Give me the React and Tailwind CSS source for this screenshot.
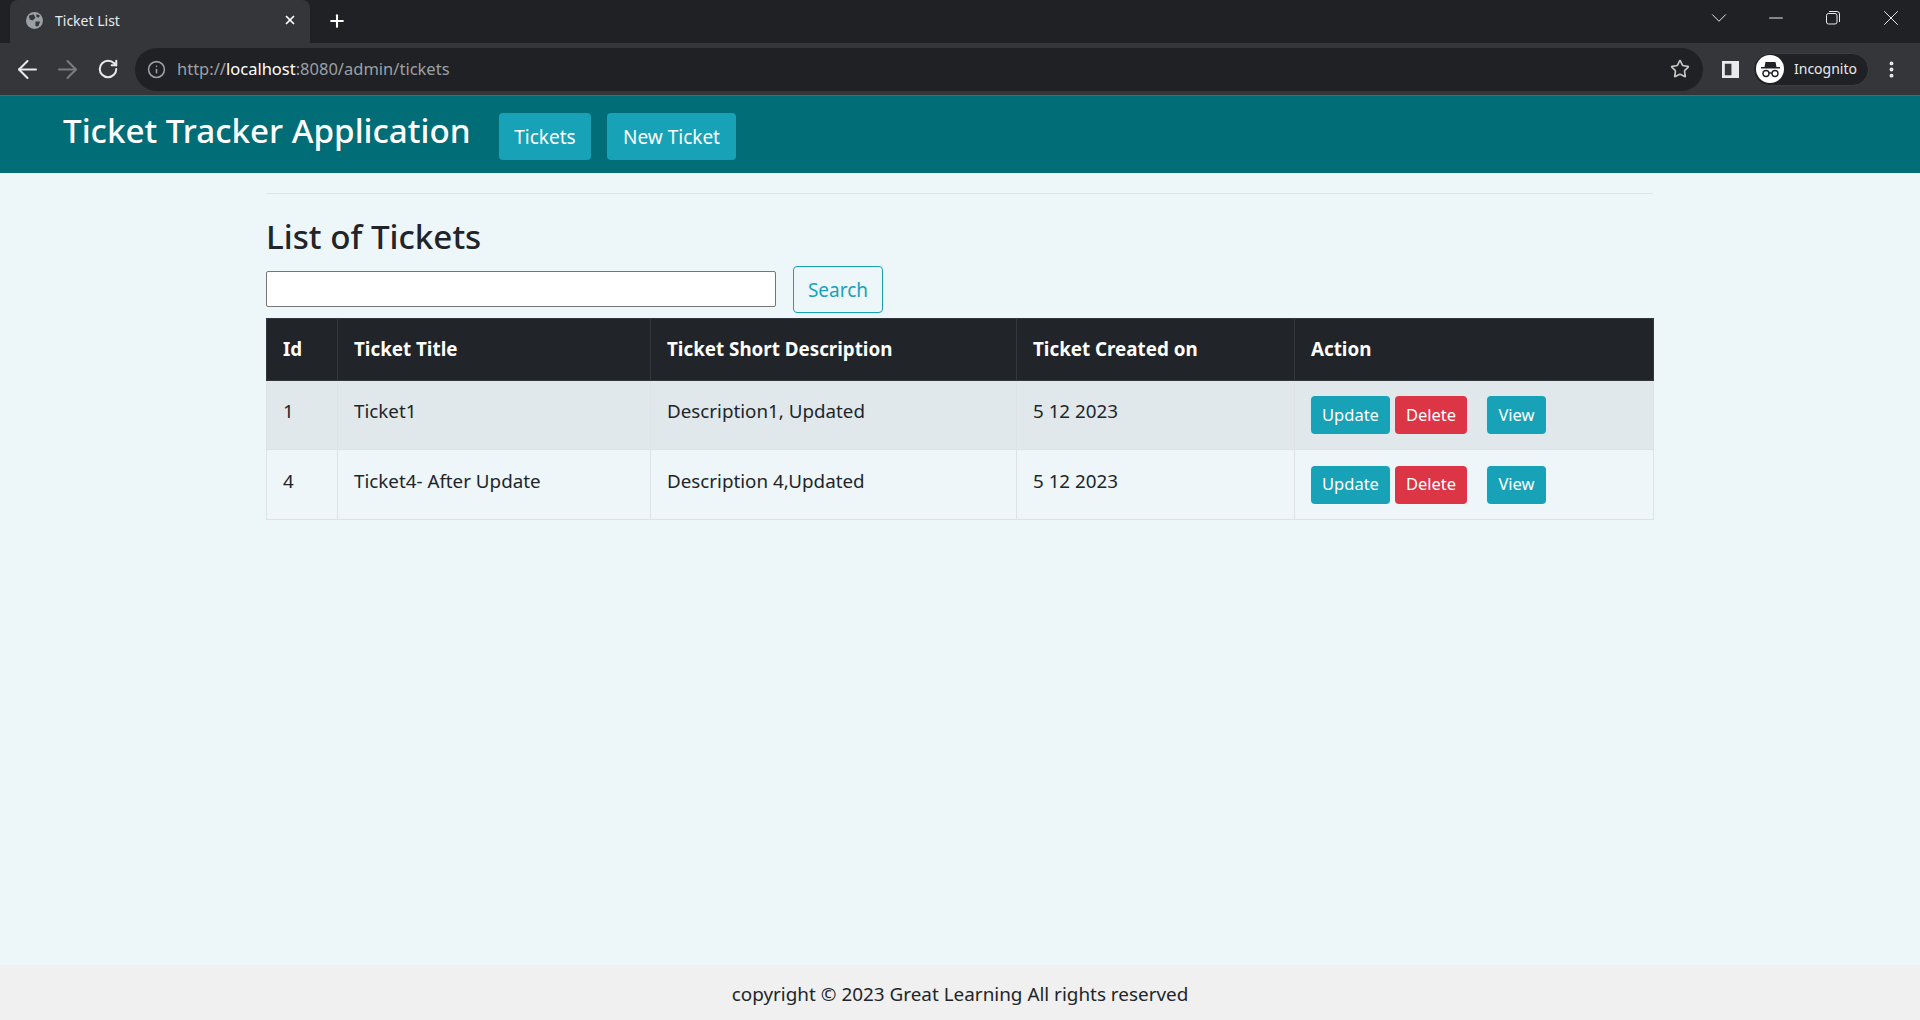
import React from 'react';
import { ArrowLeft, ArrowRight, RotateCw, Info, Star, X, Plus, ChevronDown, Minus, EllipsisVertical } from 'lucide-react';

const rows = [
    { id: 1, title: 'Ticket1', desc: 'Description1, Updated', date: '5 12 2023', rowClass: 'h-[69px] bg-[#e1e8eb]' },
    { id: 4, title: 'Ticket4- After Update', desc: 'Description 4,Updated', date: '5 12 2023', rowClass: 'h-[70px] bg-[#eef6f9]' },
];

const BrowserChrome = () => (
    <div className="font-['Noto_Sans',sans-serif]">
        <div className="flex h-[43px] bg-[#202124] pl-[10px]">
            <div className="flex h-[43px] w-[300px] items-center rounded-t-lg bg-[#35363a] pr-[13px] pb-[3px] pl-4 text-white">
                <svg width="17" height="17" viewBox="0 0 18 18" className="mr-[12px] shrink-0">
                    <circle cx="9" cy="9" r="9" fill="#9aa0a6" />
                    <path d="M3 4 L8 2.5 L10 6 L7 9 L4 8 Z M10 10 L15 10 L13 15 L10 15 Z M11 2 L15 4 L13 6 L11 5 Z" fill="#35363a" />
                </svg>
                <span className="text-[14px] text-[#e8eaed]">Ticket List</span>
                <X size={14} strokeWidth={3} className="ml-auto" />
            </div>
            <Plus size={20} strokeWidth={2.5} className="mt-[11px] ml-[17px] text-white" />
            <div className="ml-auto flex h-[36px] items-center pr-[16px] text-[#e8eaed]">
                <ChevronDown size={26} strokeWidth={0.9} />
                <Minus size={22} strokeWidth={1.1} className="ml-[33px]" />
                <svg width="14" height="14" viewBox="0 0 14 14" fill="none" stroke="currentColor" className="ml-[39px]">
                    <rect x="0.5" y="2.5" width="10.5" height="10.5" rx="2" />
                    <path d="M3 .5 H11 A2.5 2.5 0 0 1 13.5 3 V11" />
                </svg>
                <X size={26} strokeWidth={0.9} className="ml-[38px]" />
            </div>
        </div>
        <div className="flex h-[53px] items-center border-b border-[#5f6368] bg-[#35363a] pr-[18px] pl-[13px]">
            <ArrowLeft size={29} strokeWidth={1.7} className="shrink-0 text-[#e8eaed]" />
            <ArrowRight size={29} strokeWidth={1.7} className="ml-[11px] shrink-0 text-[#7a7c80]" />
            <RotateCw size={22} strokeWidth={2.2} className="ml-[15px] shrink-0 text-[#e8eaed]" />
            <div className="ml-[16px] flex h-[43px] flex-1 items-center rounded-full bg-[#202124] pr-[13px] pl-[12px] text-[16.5px]">
                <Info size={19} strokeWidth={2} className="mr-[11px] text-[#9aa0a6]" />
                <span className="text-[#9aa0a6]">http://</span>
                <span className="text-white">localhost</span>
                <span className="text-[#9aa0a6]">:8080/admin/tickets</span>
                <Star size={20} strokeWidth={2} className="ml-auto text-[#c4c7c5]" />
            </div>
            <svg width="17" height="17" viewBox="0 0 18 18" className="ml-[19px] shrink-0">
                <path fillRule="evenodd" d="M0 0H18V18H0Z M3 3V15H10V3Z" fill="#e8eaed" />
            </svg>
            <div className="ml-[14px] flex h-[33px] w-[116px] items-center rounded-full border border-[#3c3d41] bg-[#202124] pl-[2px]">
                <span className="flex h-[28px] w-[28px] items-center justify-center rounded-full bg-white">
                    <svg width="21" height="17" viewBox="0 0 21 17">
                        <path d="M5.5 1H15.5L16.5 6H20V7.5H1V6H4.5Z" fill="#202124" />
                        <circle cx="6" cy="12.5" r="3" fill="none" stroke="#202124" strokeWidth="1.4" />
                        <circle cx="15" cy="12.5" r="3" fill="none" stroke="#202124" strokeWidth="1.4" />
                        <path d="M9 12H12" stroke="#202124" strokeWidth="1.4" />
                    </svg>
                </span>
                <span className="ml-[10px] pb-[2px] text-[14px] text-[#e8eaed]">Incognito</span>
            </div>
            <EllipsisVertical size={21} strokeWidth={2.5} className="ml-[12px] shrink-0 text-[#e8eaed]" />
        </div>
    </div>
);

const ActionBtn = ({ className = '', children }) => (
    <button className={`${className} h-[38px] rounded-[4px] text-[16.5px] text-white`}>{children}</button>
);

const App = () => (
    <div className="flex h-[1020px] flex-col overflow-hidden bg-[#edf6f9] font-['Noto_Sans',sans-serif] text-[#212529]">
        <BrowserChrome />
        <header className="flex h-[77px] bg-[#006d77] pl-[63px] text-white">
            <h1 className="mt-[11px] w-[408px] text-[33.2px] leading-[48px] font-medium whitespace-nowrap">Ticket Tracker Application</h1>
            <nav className="mt-[17px] ml-[28px] flex gap-4">
                <button className="h-[47px] w-[92px] rounded-[4px] bg-[#17a2b8] pt-[1px] text-[19px]">Tickets</button>
                <button className="h-[47px] w-[129px] rounded-[4px] bg-[#17a2b8] pt-[1px] text-[19px]">New Ticket</button>
            </nav>
        </header>
        <main className="ml-[266px] w-[1387px] flex-1 pt-5">
            <hr className="border-[#dde4e7]" />
            <h2 className="mt-[19px] mb-[5px] text-[33.2px] leading-[48px] font-medium">List of Tickets</h2>
            <div className="flex items-center">
                <input className="mb-[2px] h-[36px] w-[510px] rounded-[2px] border border-[#767676] bg-white" />
                <button className="ml-[17px] h-[47px] w-[90px] rounded-[4px] border border-[#17a2b8] pt-[1px] text-[19px] text-[#17a2b8]">Search</button>
            </div>
            <table className="mt-[5px] w-[1388px] table-fixed border-collapse text-[18.8px]">
                <thead className="bg-[#212529] text-white">
                    <tr className="h-[62px]">
                        <th className="w-[71px] border border-[#32383e] px-4 text-left font-bold">Id</th>
                        <th className="w-[313px] border border-[#32383e] px-4 text-left font-bold">Ticket Title</th>
                        <th className="w-[366px] border border-[#32383e] px-4 text-left font-bold">Ticket Short Description</th>
                        <th className="w-[278px] border border-[#32383e] px-4 text-left font-bold">Ticket Created on</th>
                        <th className="border border-[#32383e] px-4 text-left font-bold">Action</th>
                    </tr>
                </thead>
                <tbody>
                    {rows.map((row) => (
                        <tr key={row.id} className={row.rowClass}>
                            <td className="border border-[#dee2e6] px-4 pb-[7px]">{row.id}</td>
                            <td className="border border-[#dee2e6] px-4 pb-[7px]">{row.title}</td>
                            <td className="border border-[#dee2e6] px-4 pb-[7px]">{row.desc}</td>
                            <td className="border border-[#dee2e6] px-4 pb-[7px]">{row.date}</td>
                            <td className="border border-[#dee2e6] px-4">
                                <div className="flex">
                                    <ActionBtn className="w-[79px] bg-[#17a2b8]">Update</ActionBtn>
                                    <ActionBtn className="ml-[5px] w-[72px] bg-[#dc3545]">Delete</ActionBtn>
                                    <ActionBtn className="ml-[20px] w-[59px] bg-[#17a2b8]">View</ActionBtn>
                                </div>
                            </td>
                        </tr>
                    ))}
                </tbody>
            </table>
        </main>
        <footer className="flex h-[55px] items-center justify-center bg-[#f0f0f0] pt-[3px] text-[18.9px]">
            copyright © 2023 Great Learning All rights reserved
        </footer>
    </div>
);

export default App;
